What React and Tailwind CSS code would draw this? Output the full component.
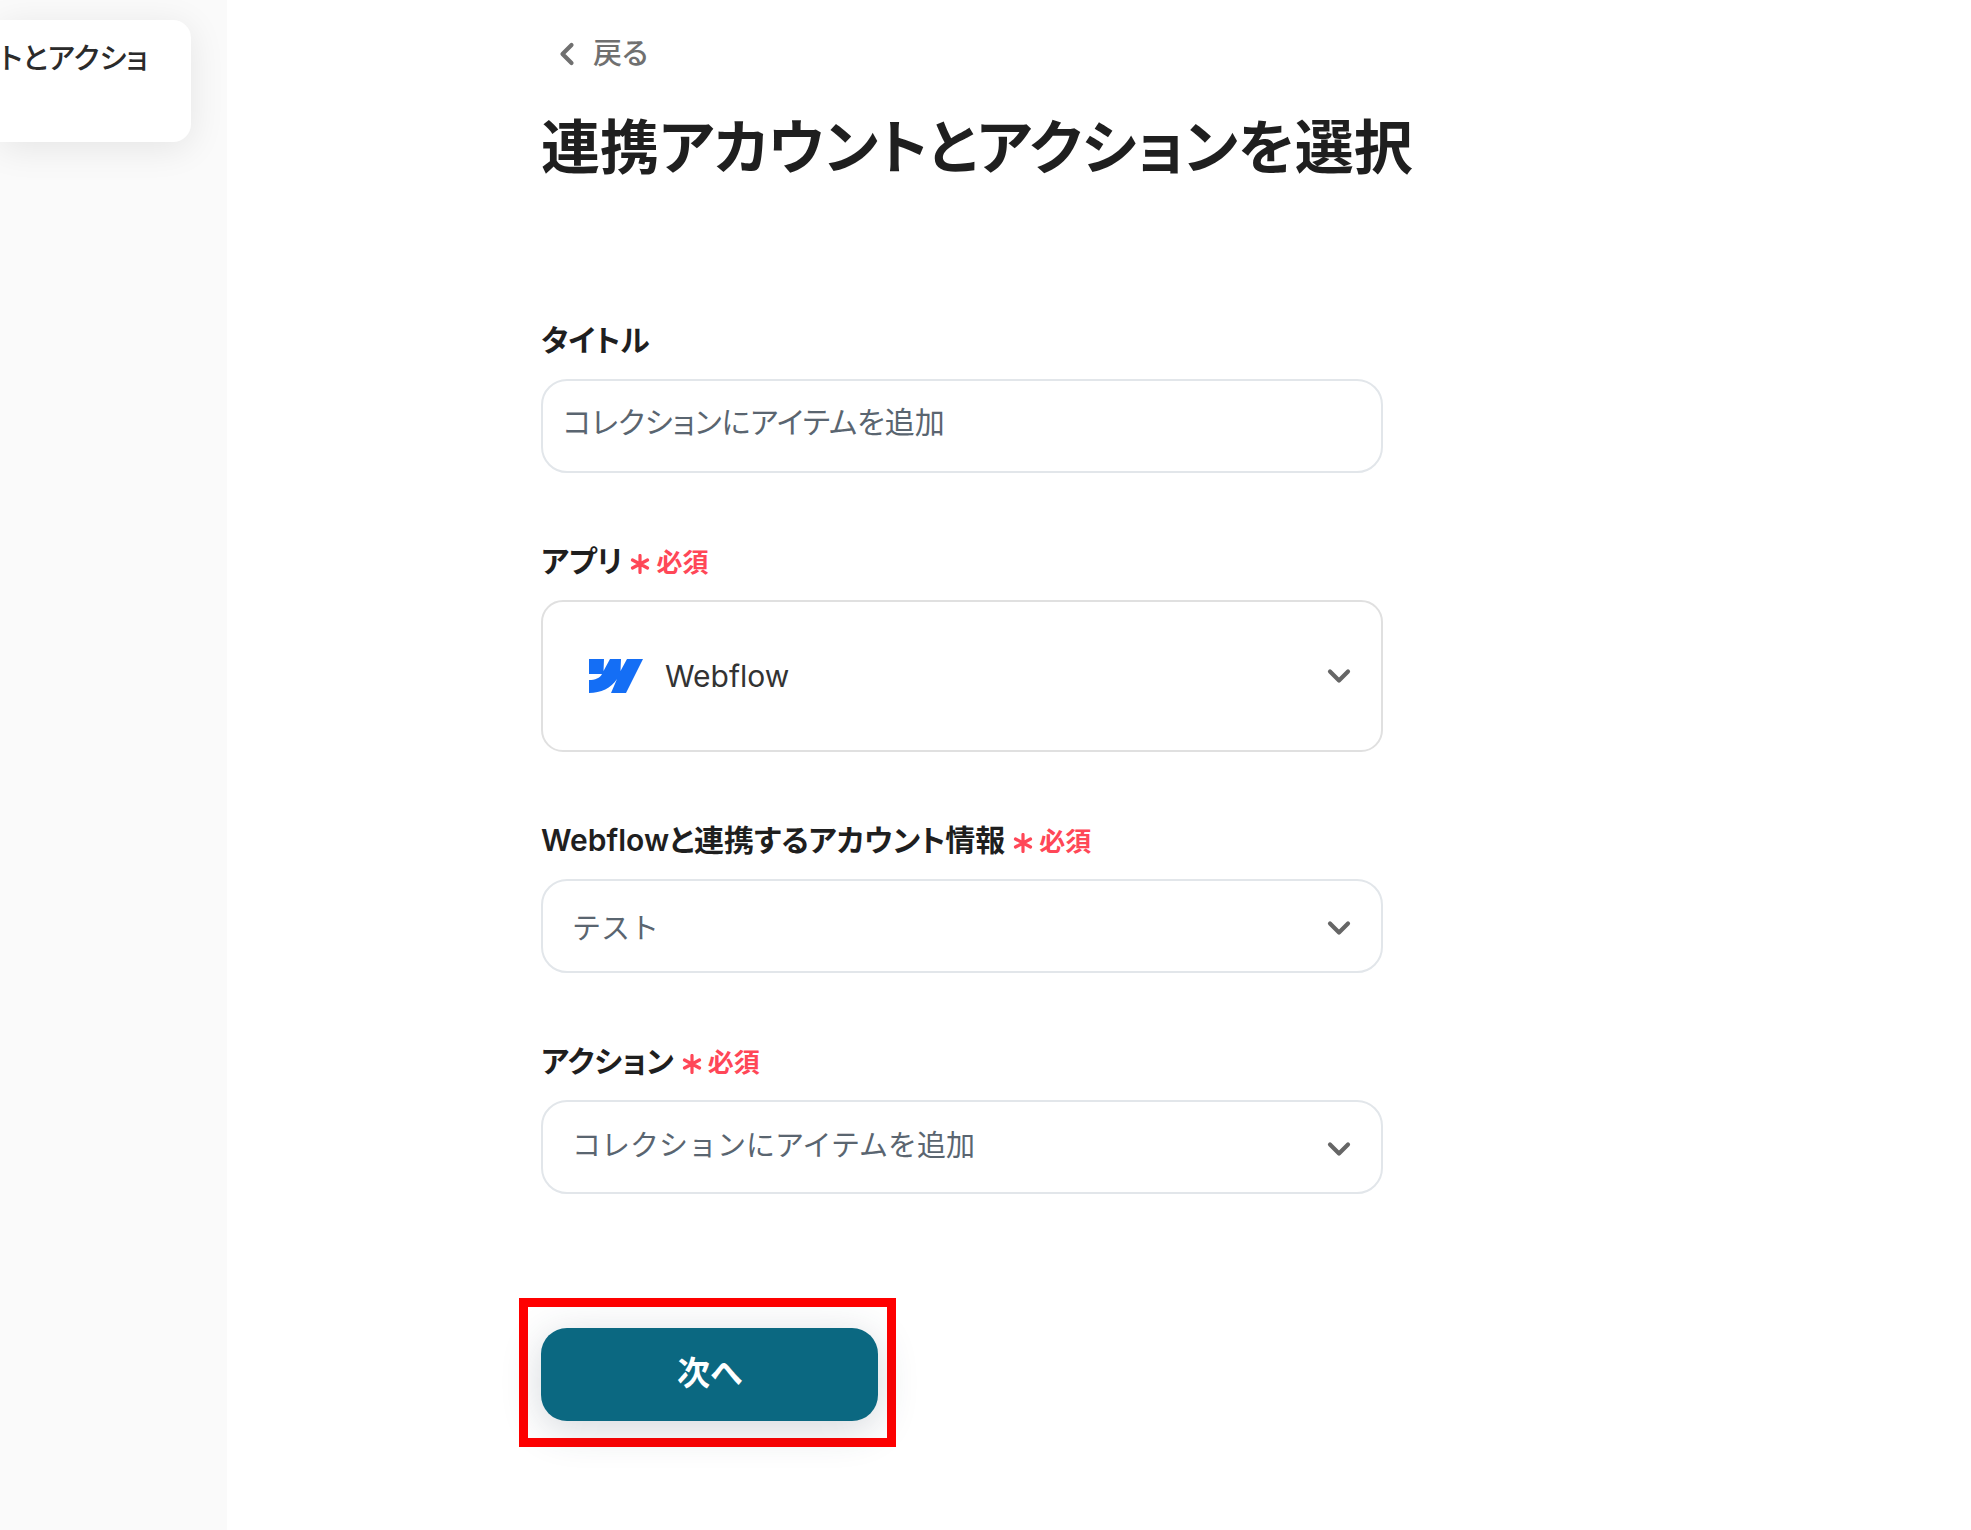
import React from 'react';
import { ChevronDown, ChevronLeft } from 'lucide-react';

const WebflowLogo = () => (
  <svg viewBox="0 0 54 34" className="w-[54px] h-[34px]" aria-hidden="true">
    <path
      fill="#146ef5"
      d="M0 0h15L14.500 12L21 0h11L31.500 12L38 0h16L37 34H22L28 20C22 29 12 34 0 34V21c6 0 11-2 13-6H0z"
    />
  </svg>
);

const Required = () => (
  <span className="flex items-center gap-1.5 pt-0.5 text-[26px] font-bold text-[#ff4757]">
    <svg viewBox="0 0 20 20" className="w-5 h-5 mt-1" fill="none" stroke="currentColor" strokeWidth="3.2" strokeLinecap="round" aria-hidden="true">
      <path d="M10 1.500v17M2.500 6l15 8M17.500 6l-15 8" />
    </svg>
    必須
  </span>
);

const Field = ({ id, label, required, children }) => (
  <div className="flex flex-col gap-[17px]">
    <label htmlFor={id} className="flex items-center gap-2 h-11 text-[30px] font-semibold text-[#1f1f1f] [font-feature-settings:'palt']">
      {label}
      {required && <Required />}
    </label>
    {children}
  </div>
);

const SelectBox = ({ id, options, icon, className }) => (
  <div className="relative flex items-center">
    {icon && <span className="absolute left-12 pointer-events-none">{icon}</span>}
    <select id={id} className={`w-full appearance-none border-2 bg-white outline-none ${className}`}>
      {options.map((option) => (
        <option key={option}>{option}</option>
      ))}
    </select>
    <ChevronDown
      className={`absolute right-[26px] w-9 h-9 text-[#666666] pointer-events-none ${icon ? '' : 'mt-1'}`}
      strokeWidth={2.8}
    />
  </div>
);

const Sidebar = () => (
  <aside className="w-[227px] shrink-0 overflow-hidden bg-[#fafafa] pt-5">
    <div className="mr-9 h-[122px] rounded-r-[18px] bg-white pt-4 shadow-[0_6px_36px_rgba(0,0,0,0.09)]">
      <p className="whitespace-nowrap text-[29px] leading-[46px] font-medium text-[#2b2b2b] [font-feature-settings:'palt']">
        トとアクショ
      </p>
    </div>
  </aside>
);

const App = () => {
  return (
    <div className="flex min-h-screen bg-white font-['Inter','Noto_Sans_CJK_JP',sans-serif]">
      <Sidebar />
      <main className="flex-1 pl-[314px] pr-8 pt-8 pb-20">
        <button type="button" className="flex items-center gap-2 h-11 pl-2 text-[29px] font-medium text-[#707070] [font-feature-settings:'palt']">
          <ChevronLeft className="w-9 h-9" strokeWidth={2.8} />
          戻る
        </button>
        <h1 className="mt-7 text-[59px] leading-[88px] font-bold text-[#1f1f1f] [font-feature-settings:'palt']">
          連携アカウントとアクションを選択
        </h1>

        <form className="mt-[126px] max-w-[842px]" onSubmit={(e) => e.preventDefault()}>
          <div className="flex flex-col gap-[66px]">
            <Field id="title" label="タイトル">
              <input
                id="title"
                type="text"
                defaultValue="コレクションにアイテムを追加"
                className="w-full h-[94px] rounded-[26px] border-2 border-[#e2e6ea] px-5 pb-3 text-[30px] text-[#5a6570] outline-none [font-feature-settings:'palt']"
              />
            </Field>
            <Field id="app" label="アプリ" required>
              <SelectBox
                id="app"
                options={['Webflow']}
                icon={<WebflowLogo />}
                className="h-[152px] rounded-[22px] border-[#e0e0e0] pl-[122px] text-[30px] text-[#333333]"
              />
            </Field>
            <Field id="account" label="Webflowと連携するアカウント情報" required>
              <SelectBox
                id="account"
                options={['テスト']}
                className="h-[94px] rounded-[26px] border-[#e2e6ea] pl-[29px] pt-1.5 text-[29px] text-[#5a6570]"
              />
            </Field>
            <Field id="action" label="アクション" required>
              <SelectBox
                id="action"
                options={['コレクションにアイテムを追加']}
                className="h-[94px] rounded-[26px] border-[#e2e6ea] pl-[29px] pb-0.5 text-[29px] text-[#5a6570]"
              />
            </Field>
          </div>

          <div className="mt-[104px] -ml-[22px] w-fit border-[9px] border-[#ff0000] pt-[21px] pr-[9px] pb-[17px] pl-[13px]">
            <button
              type="submit"
              className="w-[337px] h-[93px] rounded-[26px] bg-[#0b6881] pb-0.5 text-[33px] font-bold text-white shadow-[0_8px_40px_rgba(40,60,80,0.2)] [font-feature-settings:'palt']"
            >
              次へ
            </button>
          </div>
        </form>
      </main>
    </div>
  );
};

export default App;
